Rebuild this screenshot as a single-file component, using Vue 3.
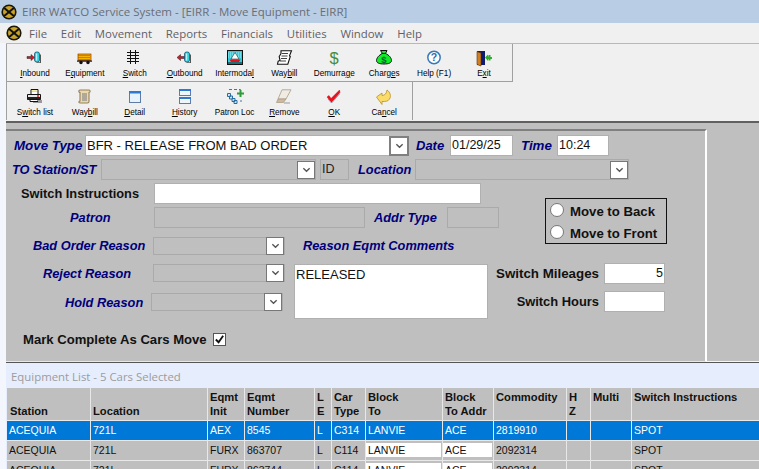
<script setup>
const cyl = '<rect x="1" y="2" width="5" height="10" rx="2" fill="#2fd3e0" stroke="#0a4060" stroke-width=".7"/><rect x="2.500" y="3.500" width="1.200" height="7" fill="#b8f4f8"/><path d="M6.500 4.500h1V13H3v-.8h3.500z" fill="#555"/>'
const row1 = [
  { pre: '', u: 'I', post: 'nbound', svg: '<path d="M0 6.500h4V4.500l3.500 3-3.500 3v-2H0z" fill="#e8101c" stroke="#222" stroke-width=".5"/><g transform="translate(6.500 0)">' + cyl + '</g>' },
  { pre: 'E', u: 'q', post: 'uipment', svg: '<rect x="1" y="4" width="13" height="6.500" fill="#f6b400" stroke="#7a1a10" stroke-width=".6"/><path d="M1.500 5.500h12M1.500 7.500h12M1.500 9.500h12" stroke="#e2281a" stroke-dasharray="1 1" stroke-width="1"/><rect x="0" y="10.500" width="15" height="1.200" fill="#111"/><circle cx="4" cy="12.500" r="1.700" fill="#111"/><circle cx="11" cy="12.500" r="1.700" fill="#111"/>' },
  { pre: '', u: 'S', post: 'witch', svg: '<path d="M3.500 0v14M8.500 0v14M0 2.500h12M0 5.500h12M0 8.500h12M0 11.500h12" stroke="#111" stroke-width="1" fill="none"/>' },
  { pre: '', u: 'O', post: 'utbound', svg: '<path d="M0 7.500l3.500-3v2h4v2h-4v2z" fill="#e8101c" stroke="#222" stroke-width=".5"/><g transform="translate(6.500 0)">' + cyl + '</g>' },
  { pre: 'Intermoda', u: 'l', post: '', svg: '<rect x=".5" y=".5" width="15" height="14" fill="#2ccfe0" stroke="#111"/><path d="M1 3h14M1 5h14M1 7h14" stroke="#a8eef4" stroke-dasharray="1 1"/><path d="M8 2.500l4 6.500H4z" fill="#fff" stroke="#111" stroke-width=".5"/><path d="M2.500 9.500h11l-1.500 2.500H4z" fill="#e0141c"/><path d="M1 13h14" stroke="#111"/>' },
  { pre: 'Way', u: 'b', post: 'ill', svg: '<path d="M5 .8h10.500l-2 5 .8.700-2.500 7.700H1.500l.7-3 1.800-.7-.8-4 1.800-3z" fill="#fff" stroke="#111" stroke-width="1.100"/><path d="M6 3.500h6M5.500 6h6M5 8.500h6M4 11h6" stroke="#111" stroke-width=".8"/>' },
  { pre: 'Demurra', u: 'g', post: 'e', svg: '<text x="8" y="14" text-anchor="middle" font-family="Liberation Sans" font-size="16.500" fill="#468c3a">$</text>' },
  { pre: 'Charg', u: 'e', post: 's', svg: '<path d="M4.500.5h6.500L9.500 3.500c3.500 1.500 6 4.500 6 7 0 2.500-3 3.500-7.500 3.500S.5 13 .5 10.500c0-2.500 2.500-5.500 6-7z" fill="#10ec28" stroke="#111"/><path d="M5.500 3.500h4.500" stroke="#111"/><text x="8" y="12.500" text-anchor="middle" font-family="Liberation Sans" font-weight="700" font-size="9.500" fill="#063">$</text>' },
  { pre: 'Help (F1)', u: '', post: '', svg: '<circle cx="8" cy="7.500" r="6.200" fill="#fff" stroke="#3a78b8" stroke-width="1.500"/><text x="8" y="11.300" text-anchor="middle" font-family="Liberation Sans" font-weight="700" font-size="10.500" fill="#2a6cb0">?</text>' },
  { pre: 'E', u: 'x', post: 'it', svg: '<rect x="1" y="1" width="8" height="14" fill="#101c70"/><path d="M1 1.500l4 1.500v13l-4-1.500z" fill="#d08020" stroke="#5a2c00" stroke-width=".6"/><path d="M9 7.500l3-3v2h.500V5h2v2h1.500v2h-1.500v1.500h-2V9H12v2z" fill="#30b030"/>' }
]
const row2 = [
  { pre: 'S', u: 'w', post: 'itch list', svg: '<path d="M4 .5h7v5H4z" fill="#fff" stroke="#111"/><path d="M5 1.500h5v1.500H5z" fill="#f4e060"/><path d="M.5 5.500h13v5H.5z" fill="#e8e8e8" stroke="#111"/><path d="M.5 8h13v2.500H.5z" fill="#222"/><path d="M3 10.500h8v2H3z" fill="#fff" stroke="#111"/><path d="M10 7h2" stroke="#e8101c" stroke-width="1.500"/><path d="M11 11h4v3h-9v-1h5z" fill="#999"/>' },
  { pre: 'Way', u: 'b', post: 'ill', svg: '<path d="M3 1h9c1.500 0 1.500 2.500 0 2.500v9c0 1.500-1 1.500-1.500 1.500H3c-1.500 0-1.500-2 0-2V3.500C1.500 3.500 1.500 1 3 1z" fill="#ead8ae" stroke="#94805a" stroke-width="1.100"/><path d="M5 5h5M5 7h5M5 9h5M5 11h5" stroke="#6a6e80" stroke-width=".9"/>' },
  { pre: '', u: 'D', post: 'etail', svg: '<rect x="2.500" y="2.500" width="11" height="11" fill="#e6f2fc" stroke="#5f7ba8"/><rect x="2" y="2" width="12" height="2.500" fill="#2f7ad0"/>' },
  { pre: '', u: 'H', post: 'istory', svg: '<rect x="2.500" y=".5" width="11" height="6" fill="#eef6fc" stroke="#5f7ba8"/><rect x="2" y="0" width="12" height="2" fill="#2f7ad0"/><rect x="2.500" y="8.500" width="11" height="6" fill="#eef6fc" stroke="#5f7ba8"/><rect x="2" y="8" width="12" height="2" fill="#2f7ad0"/>' },
  { pre: 'Patron Loc', u: '', post: '', svg: '<path d="M2 .5h3M7 .5h3M12 .5h1.500v2M14 11v2" stroke="#3a78a8" fill="none"/><path d="M.5 4.500h3v3h-3zM2.500 7h3v3h-3zM5 9.500h3v3H5zM7 11.500h3v3H7z" fill="#cfe6f8" stroke="#2a6c9c"/><path d="M10 3.500h2.500V1h2v2.500H17v2h-2.500V8h-2V5.500H10z" fill="#2e9a3a"/>' },
  { pre: '', u: 'R', post: 'emove', svg: '<path d="M6 .8h9L10 10H2z" fill="#f0ece4" stroke="#b8ac98"/><path d="M2 10h8l-2.500 3.500H.5z" fill="#cdb8a0" stroke="#a89880" stroke-width=".7"/><path d="M8 14h6" stroke="#999"/>' },
  { pre: '', u: 'O', post: 'K', svg: '<path d="M1 8l2-1.500L5 9.500 13.500 1l.5 2.500L5.500 13.500z" fill="#ec101c" stroke="#b00" stroke-width=".4"/><path d="M2 10l3.500 4 8-9" stroke="#8898b0" stroke-width="1" fill="none"/>' },
  { pre: 'Ca', u: 'n', post: 'cel', svg: '<path d="M.5 8l5.500-4v2.500c3 0 4.500-2 5-5.500 3 2 4.500 6 2.500 9-1.500 2.500-4 2.500-7.500 2.500v3z" fill="#fcdc68" stroke="#b89020" stroke-width=".8"/>' }
]
const columns = [
  { top: '', bottom: 'Station', w: 84 }, { top: '', bottom: 'Location', w: 117 },
  { top: 'Eqmt', bottom: 'Init', w: 37 }, { top: 'Eqmt', bottom: 'Number', w: 70 },
  { top: 'L', bottom: 'E', w: 17 }, { top: 'Car', bottom: 'Type', w: 34 },
  { top: 'Block', bottom: 'To', w: 77 }, { top: 'Block', bottom: 'To Addr', w: 51 },
  { top: 'Commodity', bottom: '', w: 73 }, { top: 'H', bottom: 'Z', w: 24 },
  { top: 'Multi', bottom: '', w: 41 }, { top: 'Switch Instructions', bottom: '', w: 128 }
]
const rows = [
  ['ACEQUIA', '721L', 'AEX', '8545', 'L', 'C314', 'LANVIE', 'ACE', '2819910', '', '', 'SPOT'],
  ['ACEQUIA', '721L', 'FURX', '863707', 'L', 'C114', 'LANVIE', 'ACE', '2092314', '', '', 'SPOT'],
  ['ACEQUIA', '721L', 'FURX', '863744', 'L', 'C114', 'LANVIE', 'ACE', '2092314', '', '', 'SPOT']
]
const menus = ['File', 'Edit', 'Movement', 'Reports', 'Financials', 'Utilities', 'Window', 'Help']
</script>

<template>
  <div class="app">
    <div class="title">
      <svg class="logo" viewBox="0 0 20 20"><circle cx="10" cy="10" r="9.500" fill="#1a1608"/><circle cx="10" cy="10" r="7.500" fill="#c9a227"/><path d="M4 5l12 10M16 5L4 15" stroke="#111" stroke-width="2.500"/></svg>
      <span>EIRR WATCO Service System - [EIRR - Move Equipment - EIRR]</span>
    </div>
    <div class="menu">
      <svg class="logo small" viewBox="0 0 20 20"><circle cx="10" cy="10" r="9.500" fill="#1a1608"/><circle cx="10" cy="10" r="7.500" fill="#c9a227"/><path d="M4 5l12 10M16 5L4 15" stroke="#111" stroke-width="2.500"/></svg>
      <span v-for="m in menus" :key="m" class="menu-item">{{ m }}</span>
    </div>
    <div class="tool-area">
      <div class="tool-row first">
        <div v-for="b in row1" :key="b.pre + b.u + b.post" class="tool">
          <svg viewBox="0 0 16 16" class="ico" v-html="b.svg"></svg>
          <span class="tool-label">{{ b.pre }}<u>{{ b.u }}</u>{{ b.post }}</span>
        </div>
      </div>
      <div class="tool-row second">
        <div v-for="b in row2" :key="b.pre + b.u + b.post" class="tool">
          <svg viewBox="0 0 16 16" class="ico" v-html="b.svg"></svg>
          <span class="tool-label">{{ b.pre }}<u>{{ b.u }}</u>{{ b.post }}</span>
        </div>
      </div>
    </div>
    <div class="gray-band">
      <div class="panel">
        <div class="row r1">
          <label class="blue move-type">Move Type</label>
          <div class="input move-input">BFR - RELEASE FROM BAD ORDER</div>
          <span class="arrow-btn"><svg viewBox="0 0 10 6"><path d="M1.500 1l3.500 3.500L8.500 1" fill="none" stroke="#555" stroke-width="1.500"/></svg></span>
          <label class="blue date-lab">Date</label>
          <div class="input date-input">01/29/25</div>
          <label class="blue time-lab">Time</label>
          <div class="input time-input">10:24</div>
        </div>
        <div class="row r2">
          <label class="blue to-lab">TO Station/ST</label>
          <div class="disabled to-sel"><span class="arrow-btn"><svg viewBox="0 0 10 6"><path d="M1.500 1l3.500 3.500L8.500 1" fill="none" stroke="#555" stroke-width="1.500"/></svg></span></div>
          <div class="disabled id-box">ID</div>
          <label class="blue loc-lab">Location</label>
          <div class="disabled loc-sel"><span class="arrow-btn"><svg viewBox="0 0 10 6"><path d="M1.500 1l3.500 3.500L8.500 1" fill="none" stroke="#555" stroke-width="1.500"/></svg></span></div>
        </div>
        <div class="mid">
          <div class="mid-left">
            <div class="row r3">
              <label class="black sw-lab">Switch Instructions</label>
              <div class="input sw-input"></div>
            </div>
            <div class="row r4">
              <label class="blue patron-lab">Patron</label>
              <div class="disabled patron-box"></div>
              <label class="blue addr-lab">Addr Type</label>
              <div class="disabled addr-box"></div>
            </div>
            <div class="row r5">
              <label class="blue bad-lab">Bad Order Reason</label>
              <div class="disabled reason-sel"><span class="arrow-btn"><svg viewBox="0 0 10 6"><path d="M1.500 1l3.500 3.500L8.500 1" fill="none" stroke="#555" stroke-width="1.500"/></svg></span></div>
              <label class="blue comments-lab">Reason Eqmt Comments</label>
            </div>
          </div>
          <div class="radio-box">
            <div class="radio-line"><span class="radio"></span><span class="radio-text">Move to Back</span></div>
            <div class="radio-line"><span class="radio"></span><span class="radio-text">Move to Front</span></div>
          </div>
        </div>
        <div class="lower">
          <div class="lower-left">
            <div class="row r6">
              <label class="blue reject-lab">Reject Reason</label>
              <div class="disabled reason-sel"><span class="arrow-btn"><svg viewBox="0 0 10 6"><path d="M1.500 1l3.500 3.500L8.500 1" fill="none" stroke="#555" stroke-width="1.500"/></svg></span></div>
            </div>
            <div class="row r7">
              <label class="blue hold-lab">Hold Reason</label>
              <div class="disabled reason-sel"><span class="arrow-btn"><svg viewBox="0 0 10 6"><path d="M1.500 1l3.500 3.500L8.500 1" fill="none" stroke="#555" stroke-width="1.500"/></svg></span></div>
            </div>
          </div>
          <div class="input textarea">RELEASED</div>
          <div class="lower-right">
            <div class="row r6b">
              <label class="black mile-lab">Switch Mileages</label>
              <div class="input num">5</div>
            </div>
            <div class="row r7b">
              <label class="black hours-lab">Switch Hours</label>
              <div class="input num"></div>
            </div>
          </div>
        </div>
        <div class="row r8">
          <label class="black mark-lab">Mark Complete As Cars Move</label>
          <span class="check"><svg viewBox="0 0 12 12"><path d="M2 6l3 3 5-7" fill="none" stroke="#111" stroke-width="2"/></svg></span>
        </div>
      </div>
    </div>
    <div class="list">
      <div class="list-title">Equipment List - 5 Cars Selected</div>
      <div class="grid-head">
        <div v-for="(c, k) in columns" :key="c.top + c.bottom" class="hcell" :class="{ lead: k === 0 }" :style="{ width: c.w + 'px' }">
          <div class="hline">{{ c.top }}</div>
          <div class="hline">{{ c.bottom }}</div>
        </div>
      </div>
      <div v-for="(r, i) in rows" :key="i" class="grid-row" :class="{ selected: i === 0 }">
        <div v-for="(v, j) in r" :key="j" class="cell" :class="{ editable: i > 0 && (j === 6 || j === 7) }" :style="{ width: columns[j].w + 'px' }">
          <span>{{ v }}</span>
        </div>
      </div>
    </div>
  </div>
</template>

<style>
html, body { margin: 0; overflow: hidden; }
</style>

<style scoped>
.app { width: 759px; height: 469px; overflow: hidden; background: #f3f6fd; font-family: "Liberation Sans", Arial, sans-serif; }
.title { height: 23px; background: #b9cde4; display: flex; align-items: center; padding-left: 1px; gap: 5px; font: 11.500px "Open Sans", sans-serif; color: #6a6e76; white-space: nowrap; }
.logo { width: 16px; height: 16px; flex: none; }
.menu { height: 20px; background: #f0f0f0; display: flex; align-items: center; padding-left: 6px; font: 11.400px "Open Sans", sans-serif; color: #5f6068; }
.logo.small { margin-right: 7px; }
.menu-item { margin-right: 13.800px; }
.tool-area { background: #f0f0f0; border-top: 1px solid #b8b8b8; margin-left: 6px; height: 77px; }
.tool-row { height: 38px; display: flex; padding-left: 3px; box-sizing: border-box; border-left: 1px solid #a0a0a0; }
.tool-row.first { width: 507px; border-right: 1px solid #a0a0a0; border-bottom: 1px solid #a0a0a0; }
.tool-row.second { width: 407px; border-right: 1px solid #a0a0a0; }
.tool { width: 49.900px; flex: none; display: flex; flex-direction: column; align-items: center; padding-top: 6px; box-sizing: border-box; }
.second .tool { padding-top: 7px; }
.ico { width: 16px; height: 16px; flex: none; overflow: visible; }
.tool-label { font-size: 8.200px; color: #000; white-space: nowrap; margin-top: 2px; line-height: 11px; }
.gray-band { background: #bfbfbf; border-top: 2px solid #606060; height: 240px; box-sizing: border-box; padding-top: 6px; margin-left: 6px; }
.panel { width: 701px; height: 233px; box-sizing: border-box; background: #bfbfbf; border-top: 2px solid #808080; border-right: 2px solid #fff; border-bottom: 1px solid #e8e8e8; padding-top: 4px; }
.row { display: flex; align-items: center; white-space: nowrap; }
label { font-size: 12.800px; font-weight: 700; }
.blue { color: #00007c; font-style: italic; }
.black { color: #111; }
.input { background: #fff; border: 1px solid #b0b0b0; box-sizing: border-box; font-size: 13px; line-height: 19px; color: #111; padding-left: 1px; height: 21px; flex: none; }
.disabled { background: #bfbfbf; border: 1px solid #aaa; box-sizing: border-box; height: 21px; flex: none; display: flex; justify-content: flex-end; align-items: center; font-size: 12.500px; color: #222; }
.arrow-btn { width: 18px; height: 18px; flex: none; box-sizing: border-box; background: #fff; border: 1px solid #777; display: flex; align-items: center; justify-content: center; }
.arrow-btn svg { width: 9px; height: 6px; }
.r1 { height: 21px; padding-left: 8px; }
.move-type { width: 71px; font-size: 13.330px; }
.move-input { width: 304px; border-right: 0; }
.r1 .arrow-btn { width: 20px; height: 20px; margin-right: 7px; border: 2px solid #808080; }
.date-lab { width: 34px; font-size: 13px; }
.date-input { width: 63px; font-size: 12.500px; }
.time-lab { margin-left: 8px; width: 36px; font-size: 13.330px; }
.time-input { width: 52px; font-size: 12.500px; }
.r2 { height: 21px; margin-top: 3px; padding-left: 6px; }
.to-lab { width: 89px; }
.to-sel { width: 215px; }
.id-box { width: 29px; margin-left: 4px; justify-content: flex-start; padding-left: 1px; line-height: 18px; align-items: flex-start; }
.loc-lab { margin-left: 9px; width: 57px; }
.loc-sel { width: 214px; }
.mid { display: flex; height: 73px; margin-top: 3px; }
.mid-left { width: 539px; flex: none; }
.r3 { height: 21px; }
.sw-lab { margin-left: 15px; width: 133px; }
.sw-input { width: 327px; }
.r4 { height: 21px; margin-top: 3px; }
.patron-lab { margin-left: 64px; width: 84px; }
.patron-box { width: 211px; }
.addr-lab { margin-left: 9px; width: 73px; }
.addr-box { width: 52px; }
.r5 { height: 21px; margin-top: 7px; }
.bad-lab { margin-left: 27px; width: 120px; }
.reason-sel { width: 132px; height: 18px; }
.comments-lab { margin-left: 18px; }
.radio-box { box-sizing: border-box; width: 122px; height: 46px; margin-top: 15px; border: 1px solid #111; color: #111; font-size: 13.200px; font-weight: 700; padding-left: 4px; display: flex; flex-direction: column; justify-content: space-around; }
.radio-line { display: flex; align-items: center; gap: 6px; }
.radio-text { position: relative; top: 1px; }
.radio { width: 12px; height: 12px; border-radius: 50%; background: #fff; border: 1px solid #777; flex: none; }
.lower { display: flex; height: 57px; margin-top: 6px; }
.lower-left { width: 288px; flex: none; }
.r6 { height: 20px; margin-top: 1px; }
.reject-lab { margin-left: 37px; width: 110px; }
.r7 { height: 20px; margin-top: 9px; margin-left: -2px; }
.hold-lab { margin-left: 61px; width: 86px; }
.textarea { width: 194px; height: 55px; margin-top: 2px; }
.lower-right { width: 169px; margin-left: 8px; flex: none; }
.lower-right .row { justify-content: flex-end; gap: 5px; }
.mile-lab { font-size: 13.330px; }
.hours-lab { font-size: 12.900px; }
.r6b { height: 21px; margin-top: 1px; }
.r7b { height: 21px; margin-top: 7px; }
.num { width: 61px; text-align: right; padding-right: 1px; font-size: 12.500px; }
.r8 { margin-top: 11px; height: 18px; padding-left: 17px; gap: 6px; }
.mark-lab { font-size: 13.100px; }
.check { width: 13px; height: 13px; box-sizing: border-box; background: #fff; border: 1px solid #555; display: flex; }
.check svg { width: 11px; height: 11px; }
.list { border-top: 1px solid #555; margin: 1px 0 0 6px; padding-left: 1px; height: 110px; background: #e6edfc; }
.list-title { height: 25px; padding-left: 4px; font: 11.400px/28px "Open Sans", sans-serif; color: #9c9c9c; }
.grid-head, .grid-row { display: flex; }
.grid-head { height: 32px; background: #bfbfbf; }
.hcell { box-sizing: border-box; border-right: 1px solid #e8e8e8; padding: 2px 0 0 2px; font-size: 11.200px; font-weight: 700; color: #111; flex: none; white-space: nowrap; }
.hcell.lead { padding-left: 3px; }
.hline { height: 14px; line-height: 14px; }
.grid-row { height: 20px; background: #bfbfbf; border-top: 1px solid #e8e8e8; box-sizing: border-box; }
.grid-row.selected { background: #0078d7; }
.cell { box-sizing: border-box; border-right: 1px solid #e8e8e8; padding: 1px 0 0 2px; font-size: 10.500px; line-height: 17px; color: #111; flex: none; white-space: nowrap; }
.selected .cell { color: #fff; }
.editable { padding: 0; }
.editable span { display: block; background: #fff; height: 14px; line-height: 14px; margin: 2px 1px 0 0; padding-left: 2px; }
</style>
